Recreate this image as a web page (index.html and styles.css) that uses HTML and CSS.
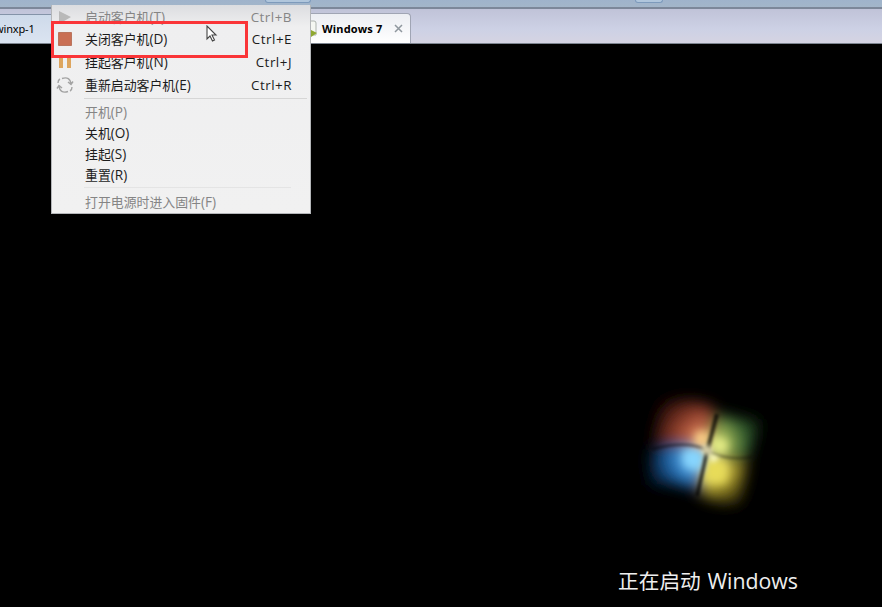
FILE: index.html
```
<!DOCTYPE html>
<html lang="zh-CN">
<head>
<meta charset="utf-8">
<title>Windows 7</title>
<link rel="stylesheet" href="styles.css">
</head>
<body>
<div class="toolbar"><span class="tool tool-wide"></span><span class="tool tool-small"></span></div>
<nav class="tabs">
  <div class="tab tab-xp">winxp-1</div>
  <div class="tab tab-active">
    <svg class="vm" width="7" height="18" viewBox="0 0 7 18"><path d="M0 1h3q2 0 2 2v12H0" fill="#f5f7f2" stroke="#adb3ae"/><path d="M0 10l6 3-6 4z" fill="#8fa832"/></svg>
    <span class="tab-title">Windows 7</span>
    <svg class="close" width="9" height="9" viewBox="0 0 9 9"><path d="M1 1l7 7M8 1L1 8" stroke="#8f979e" stroke-width="1.5"/></svg>
  </div>
</nav>
<main class="screen">
  <svg class="logo" width="160" height="140" viewBox="0 0 160 140">
    <defs>
      <filter id="soft" x="-30%" y="-30%" width="160%" height="160%"><feGaussianBlur stdDeviation="7"/></filter>
      <filter id="edge" x="-20%" y="-20%" width="140%" height="140%"><feGaussianBlur stdDeviation="1.5"/></filter>
      <filter id="glow" x="-50%" y="-50%" width="200%" height="200%"><feGaussianBlur stdDeviation="4"/></filter>
      <filter id="spark" x="-100%" y="-100%" width="300%" height="300%"><feGaussianBlur stdDeviation="2.5"/></filter>
      <radialGradient id="r" gradientUnits="userSpaceOnUse" cx="76" cy="64" r="58"><stop offset="0" stop-color="#ffd090"/><stop offset=".25" stop-color="#d07452"/><stop offset=".55" stop-color="#8c3c2a"/><stop offset="1" stop-color="#180604"/></radialGradient>
      <radialGradient id="g" gradientUnits="userSpaceOnUse" cx="80" cy="66" r="58"><stop offset="0" stop-color="#f8ff98"/><stop offset=".28" stop-color="#a4b858"/><stop offset=".58" stop-color="#366432"/><stop offset="1" stop-color="#020c04"/></radialGradient>
      <radialGradient id="b" gradientUnits="userSpaceOnUse" cx="69" cy="75" r="54"><stop offset="0" stop-color="#d0ffff"/><stop offset=".25" stop-color="#5cb0ee"/><stop offset=".55" stop-color="#1e64a8"/><stop offset="1" stop-color="#020a18"/></radialGradient>
      <radialGradient id="y" gradientUnits="userSpaceOnUse" cx="79" cy="82" r="54"><stop offset="0" stop-color="#ffffb0"/><stop offset=".35" stop-color="#d4c444"/><stop offset=".65" stop-color="#6e6218"/><stop offset="1" stop-color="#0c0802"/></radialGradient>
    </defs>
    <g filter="url(#soft)">
      <path d="M29 22Q60 15 85 28L76 69Q53 59 23 66z" fill="url(#r)"/>
      <path d="M87 33Q105 40 132 39L118 78Q95 80 77 70z" fill="url(#g)"/>
      <path d="M21 70Q52 61 75 71L67 111Q45 101 16 106z" fill="url(#b)"/>
      <path d="M77 74Q94 83 118 80L111 125Q85 125 69 114z" fill="url(#y)"/>
    </g>
    <g filter="url(#glow)"><path d="M66 52h12l-2 16-11-3z" fill="#ffd389"/><path d="M82 57l16 4-2 13-14-3z" fill="#e6ee86"/><path d="M54 70l20 1-3 20-17-5z" fill="#86d6ff"/><path d="M77 76l20 6-1 21-23-1z" fill="#e7db58"/></g>
    <g filter="url(#edge)" fill="none" stroke="#080605"><path d="M87 34L77 72" stroke-width="4" opacity=".75"/><path d="M77 72L67 116" stroke-width="3.500" opacity=".75"/><path d="M22 69Q58 60 76 70" stroke-width="2.5" opacity=".5"/><path d="M79 72Q99 81 122 77" stroke-width="2" opacity=".4"/></g>
    <g filter="url(#spark)"><circle cx="77" cy="70" r="5" fill="#fff4c4" opacity=".85"/><path d="M80 73l10 5-9 5z" fill="#ffffc8"/></g>
  </svg>
  <div class="boot">正在启动 <span class="boot-latin">Windows</span></div>
</main>

<div class="menu">
  <div class="row off"><span class="icon"><svg width="14" height="16" viewBox="0 0 14 16"><path d="M1 2l12 6-12 7z" fill="#b9b9b9"/></svg></span><span class="label">启动客户机<i>(T)</i></span><span class="key">Ctrl+B</span></div>
  <div class="row"><span class="icon"><svg width="14" height="14" viewBox="0 0 14 14"><path d="M.5.5h13v13H.5z" fill="#c96f54" stroke="#ba755e"/></svg></span><span class="label">关闭客户机<i>(D)</i></span><span class="key">Ctrl+E</span></div>
  <div class="row"><span class="icon"><svg width="14" height="14" viewBox="0 0 14 14"><path d="M1 1h4v12H1zM9 1h4v12H9z" fill="#dda55e"/></svg></span><span class="label">挂起客户机<i>(N)</i></span><span class="key">Ctrl+J</span></div>
  <div class="row"><span class="icon"><svg width="18" height="18" viewBox="0 0 18 18"><g fill="none" stroke="#a3a3a3" stroke-width="1.4"><path d="M6 2.500Q14 0 15 8M12 6l3 2.500 2-3M12 15.500Q4 18 3 10M1 12.500l2-3 3 2.500M2 7Q2 4 4 3M16 11q0 3-2 4"/></g></svg></span><span class="label">重新启动客户机<i>(E)</i></span><span class="key">Ctrl+R</span></div>
  <div class="line"></div>
  <div class="row low off"><span class="label">开机<i>(P)</i></span></div>
  <div class="row low"><span class="label">关机<i>(O)</i></span></div>
  <div class="row low"><span class="label">挂起<i>(S)</i></span></div>
  <div class="row low"><span class="label">重置<i>(R)</i></span></div>
  <div class="line line-short"></div>
  <div class="row low off"><span class="label">打开电源时进入固件<i>(F)</i></span></div>
</div>
<div class="highlight"></div>
<svg class="cursor" width="12" height="18" viewBox="0 0 12 18"><path d="M1 1v13l3-3 2.500 5 2-1-2.500-5h4z" fill="#fff" stroke="#444" stroke-width="1.1"/></svg>
</body>
</html>
```
FILE: styles.css
```
* { box-sizing: border-box; }
body {
  margin: 0;
  width: 882px;
  height: 607px;
  overflow: hidden;
  position: relative;
  display: flex;
  flex-direction: column;
  background: #000;
  font-family: "Noto Sans", "Noto Sans CJK SC", sans-serif;
}
.toolbar {
  height: 9px;
  flex: none;
  display: flex;
  padding-left: 265px;
  background: linear-gradient(#9fb3cb, #a3b6c9);
  border-bottom: 2px solid #7c8799;
}
.tool {
  height: 3px;
  border: 1px solid #7d9abb;
  border-top: 0;
  border-radius: 0 0 4px 4px;
  background: #b0c6dc;
}
.tool-wide { width: 46px; }
.tool-small { width: 28px; margin-left: 324px; }
.tabs {
  height: 35px;
  flex: none;
  display: flex;
  align-items: flex-end;
  background: linear-gradient(#c0c3d8, #cdd1e5 60%, #d5d4e2);
  border-bottom: 1px solid #7d8590;
}
.tab { display: flex; align-items: center; color: #000; }
.tab-xp {
  width: 51px;
  height: 29px;
  padding-bottom: 1px;
  border-top: 1px solid #8493a8;
  background: linear-gradient(#cedaea, #dbe4f1);
  font: 11px "Noto Sans", sans-serif;
  text-indent: -5px;
  letter-spacing: -.15px;
}
.tab-active {
  width: 100px;
  height: 30px;
  margin-left: 260px;
  border: 1px solid #a0a5b4;
  border-width: 1px 1px 0 0;
  border-radius: 0 4px 0 0;
  background: linear-gradient(#eceef3, #fff);
}
.vm { flex: none; }
.tab-title {
  width: 72px;
  margin-left: 4px;
  font: bold 11px "Noto Sans", sans-serif;
  letter-spacing: .2px;
  white-space: nowrap;
}
.close { flex: none; }
.screen {
  flex: 1;
  display: flex;
  flex-direction: column;
  padding: 336px 0 0 618px;
  background: #000;
}
.logo { margin-left: 12px; flex: none; }
.boot {
  margin-top: 45px;
  height: 30px;
  line-height: 30px;
  font-family: "Noto Sans CJK SC", sans-serif;
  font-size: 20.7px;
  color: #eee;
  white-space: pre;
}
.boot-latin { margin-left: 2px; font-family: "Open Sans", sans-serif; font-size: 21.3px; }
.menu {
  position: absolute;
  left: 51px;
  top: 5px;
  width: 260px;
  height: 209px;
  padding-top: .6px;
  border: 1px solid #b4b6b9;
  border-top: 0;
  background: linear-gradient(#dcdde0, #efeff0 22px, #f1f1f1);
  color: #1c1c1c;
}
.row { height: 22.6px; display: flex; align-items: center; white-space: nowrap; }
.icon { width: 25px; display: flex; justify-content: center; }
.label {
  margin-left: 8px;
  font: 12.9px/20px "Noto Sans CJK SC", sans-serif;
}
.label i { font: 13.6px/20px "Open Sans", sans-serif; }
.key {
  margin-left: auto;
  padding-right: 18px;
  font: 13.4px/20px "Open Sans", sans-serif;
  letter-spacing: .5px;
}
.off { color: #858585; }
.low { height: 21px; padding-left: 25px; }
.line { height: 1px; margin: 2px 3px 3px 32px; background: #d6d6d6; }
.line-short { margin: 1px 19px 3.600px 32px; background: #e4e4e4; }
.highlight {
  position: absolute;
  left: 51px;
  top: 21px;
  width: 197px;
  height: 37px;
  border: 3px solid #fa3538;
}
.cursor { position: absolute; left: 206px; top: 25px; }
```
